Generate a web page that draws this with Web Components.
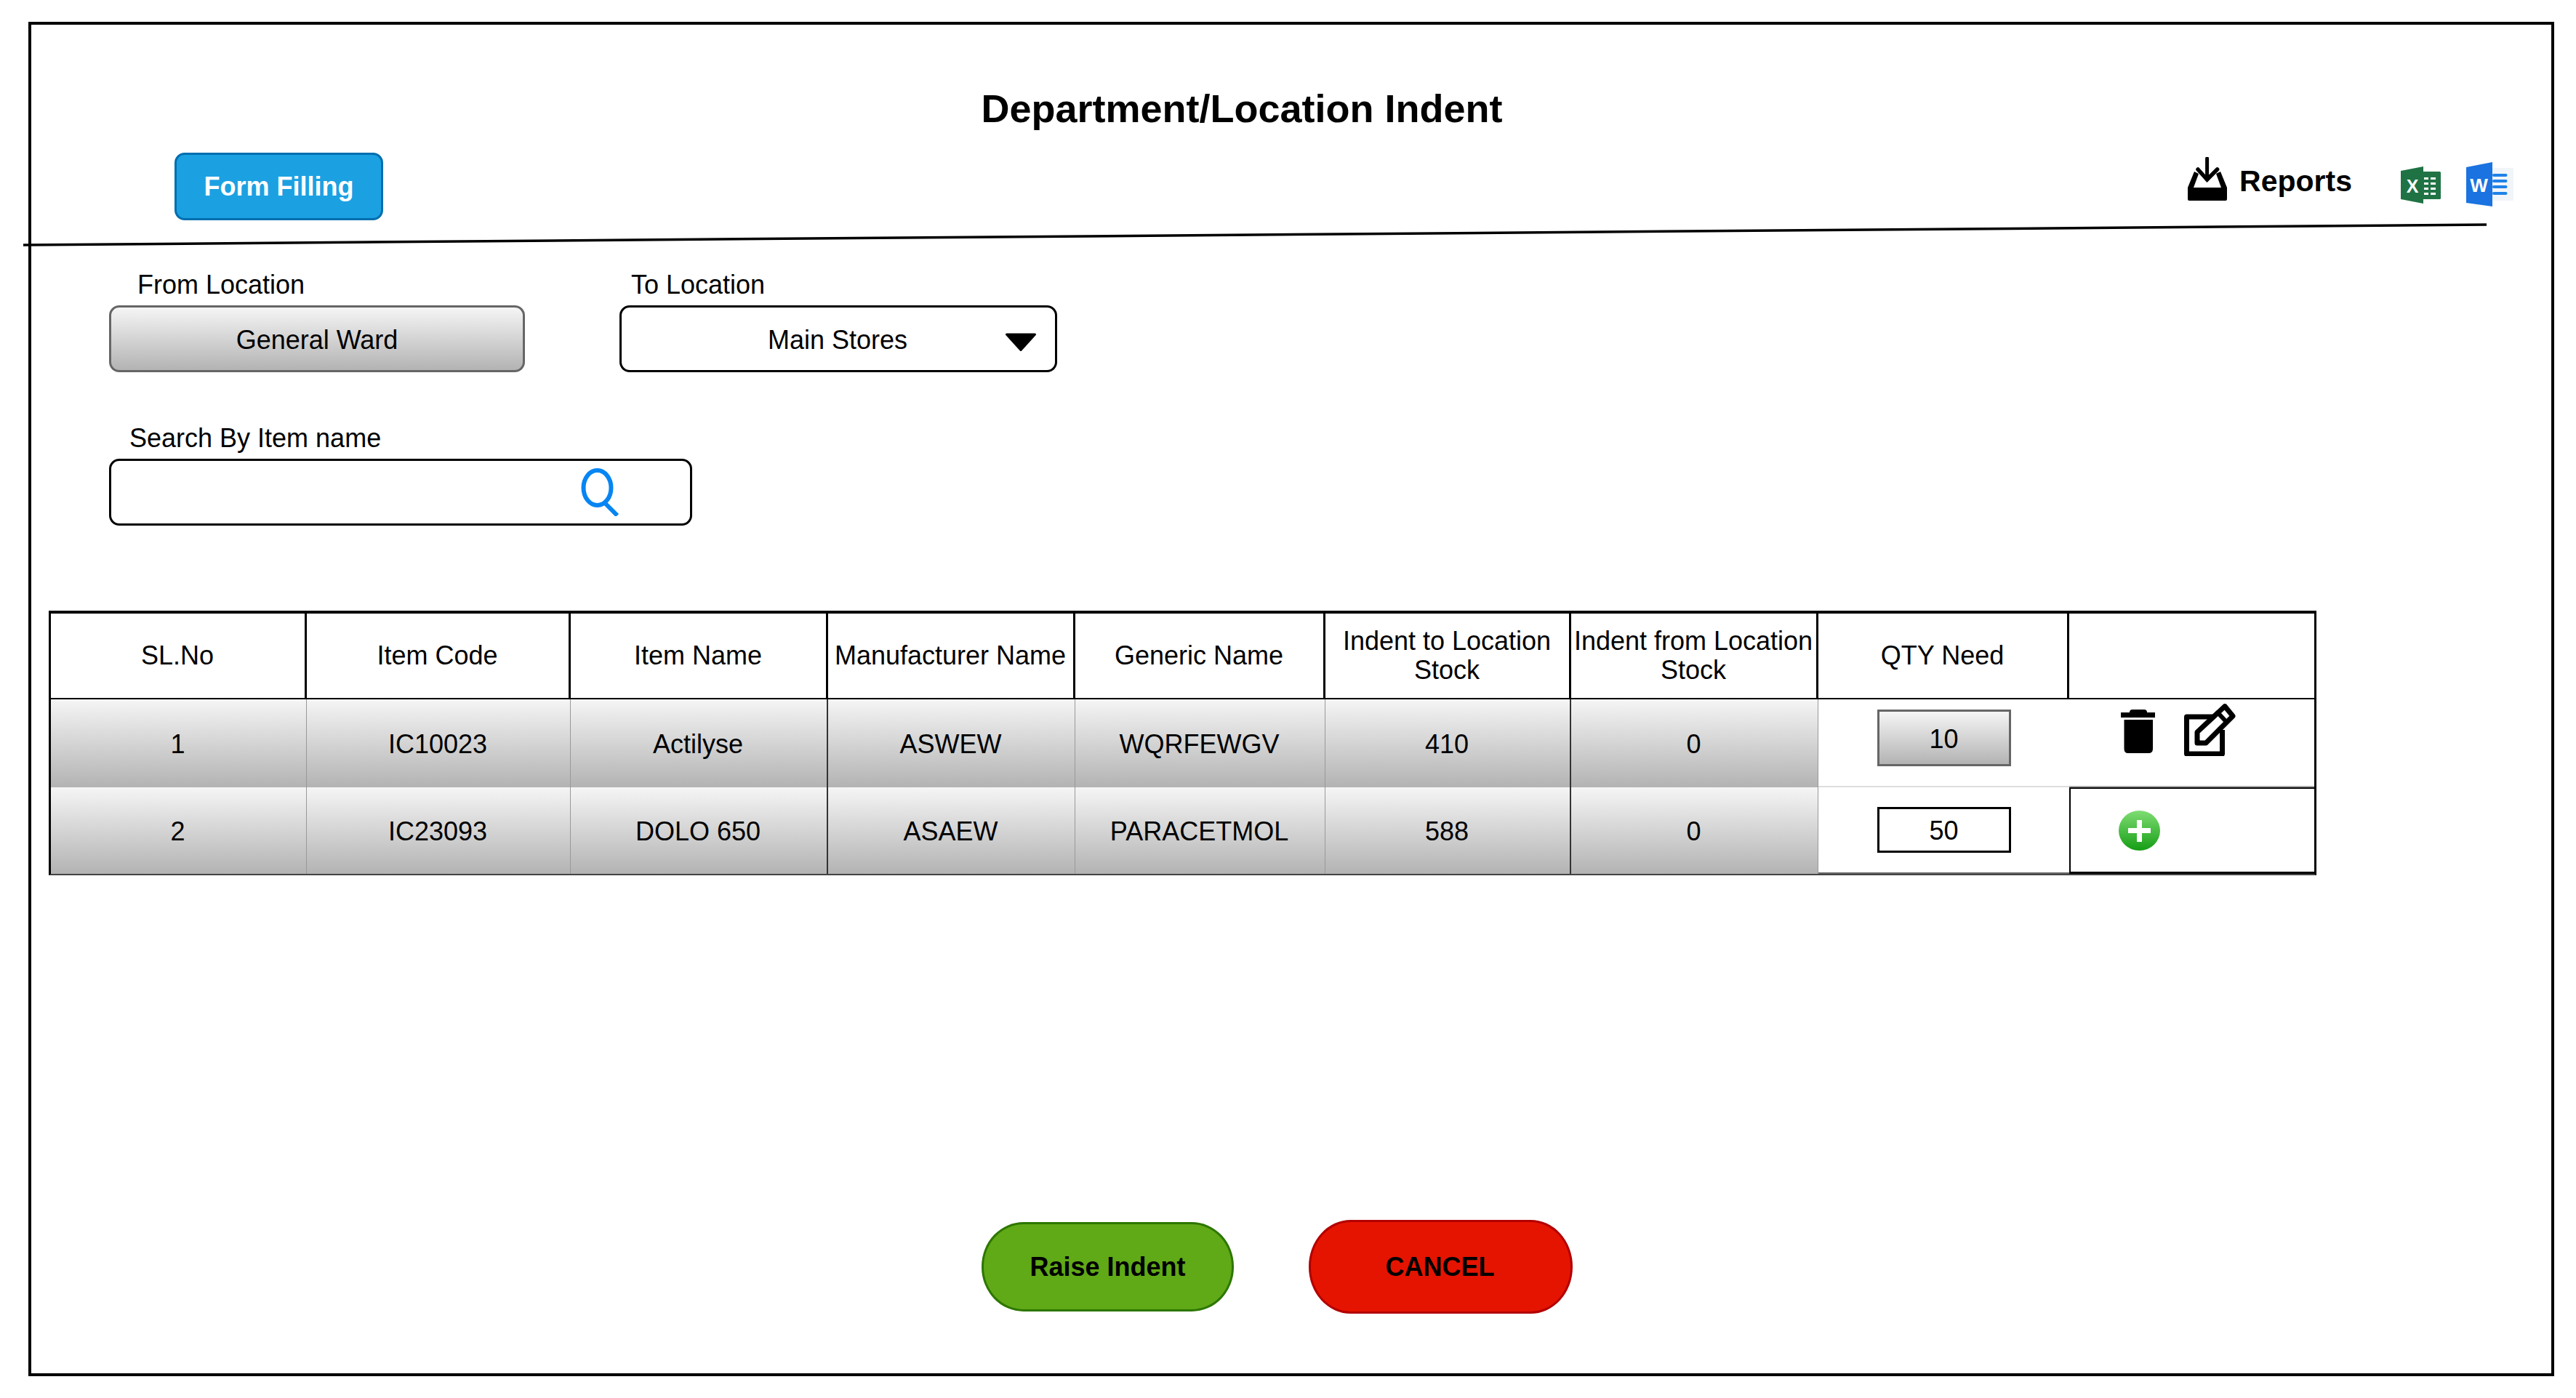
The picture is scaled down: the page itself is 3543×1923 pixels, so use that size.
<!DOCTYPE html>
<html><head><meta charset="utf-8">
<style>
html,body{margin:0;padding:0;background:#fff;}
body{font-family:"Liberation Sans",Arial,sans-serif;font-size:36px;color:#000;}
</style></head><body>
<indent-page></indent-page>
<script>
function el(name, css, html){
  customElements.define(name, class extends HTMLElement{
    constructor(){super();const r=this.attachShadow({mode:'open'});r.innerHTML='<style>'+css+'</style>'+html;}
  });
}
const GRAD='linear-gradient(180deg,#f5f5f5 0%,#b3b3b3 100%)';
el('ui-button',`
:host{display:flex;align-items:center;justify-content:center;box-sizing:border-box;font-weight:700;font-size:36px;color:#000;border:3px solid #000;padding-top:1px;}
:host([kind=form]){width:287px;height:93px;background:#1ba1e2;border-color:#006eaf;border-radius:14px;color:#fff;}
:host([kind=raise]){width:347px;height:123px;background:#60a917;border-color:#2d7600;border-radius:58px/61px;}
:host([kind=cancel]){width:363px;height:129px;background:#e51400;border-color:#b20000;border-radius:58px/64px;padding-right:2px;}
`,`<slot></slot>`);
el('ui-field',`
:host{display:block;}
.l{height:44px;line-height:44px;margin-bottom:6px;white-space:nowrap;padding-left:var(--label-x,0);}
.b{box-sizing:border-box;height:92px;padding-top:3px;border:3px solid #000;border-radius:14px;display:flex;align-items:center;justify-content:center;position:relative;}
:host([look=grey]) .b{background:${GRAD};border-color:#666;}
`,`<div class="l"><slot name="label"></slot></div><div class="b"><slot></slot></div>`);
el('ui-dropdown',`
:host{display:flex;align-items:center;flex:1;box-sizing:border-box;padding:0 26px 0 0;}
.t{flex:1;text-align:center;padding-left:66px;}
svg{display:block;width:42px;height:25px;margin-top:5px;}
`,`<span class="t"><slot></slot></span><svg viewBox="0 0 42 25"><path d="M1.500 2H40.500L21 23.500Z" fill="#000" stroke="#000" stroke-width="3" stroke-linejoin="round"/></svg>`);
el('ui-search',`
:host{display:flex;flex:1;justify-content:flex-end;box-sizing:border-box;padding:0 96px 3px 0;}
svg{display:block;width:54px;height:66px;}
`,`<svg viewBox="0 0 54 66"><ellipse cx="22.500" cy="27" rx="19" ry="24" fill="none" stroke="#0785f2" stroke-width="6"/><path d="M33 48L50 65" fill="none" stroke="#0785f2" stroke-width="6"/></svg>`);
el('ui-cell',`
:host{display:flex;align-items:center;justify-content:center;box-sizing:border-box;text-align:center;line-height:40px;overflow:visible;white-space:nowrap;}
:host([kind=head]){border-right:3px solid #000;border-bottom:2px solid #000;padding-right:1px;}
:host([kind=head][end]){border-right:0;}
:host([kind=data]){background:${GRAD};border-right:1px solid #999;padding:3px 2px 0 0;}
:host([kind=data][dark]){border-right:2px solid #333;}
:host([kind=plain]){background:#fff;border-bottom:2px solid #ddd;}
:host([kind=plain][last]){border-bottom:2px solid #666;}
:host([kind=action]){background:#fff;justify-content:flex-start;}
:host([kind=action][open]){border-bottom:2px solid #aaa;}
`,`<slot></slot>`);
el('qty-box',`
:host{display:flex;align-items:center;justify-content:center;box-sizing:border-box;width:184px;border:3px solid #000;margin:0 auto;}
:host([look=grey]){height:78px;background:${GRAD};border-color:#666;margin-top:-13px;padding-top:4px;}
:host([look=plain]){height:63px;padding-top:2px;}
`,`<slot></slot>`);
el('icon-trash',`:host{display:block;width:47px;height:60px;}svg{display:block;width:100%;height:100%;}`,
`<svg viewBox="0 0 47 60"><path d="M12 4Q12 0 16 0H32Q36 0 36 4Z" fill="#000"/><rect x="0" y="4" width="47" height="7" fill="#000"/><path d="M4.500 14H44V54Q44 60 38 60H10Q4.500 60 4.500 54Z" fill="#000"/></svg>`);
el('icon-edit',`:host{display:block;width:71px;height:72px;}svg{display:block;width:100%;height:100%;}`,
`<svg viewBox="0 0 71 72"><path d="M40 18H3.500V69H52.500V36" fill="none" stroke="#000" stroke-width="7" stroke-linejoin="round"/><path d="M56 3.500L67 17L30 54H18V39Z" fill="#fff" stroke="#000" stroke-width="7" stroke-linejoin="round"/><path d="M46 12L60 27" stroke="#000" stroke-width="6"/><path d="M17 45L26 56H17Z" fill="#000"/></svg>`);
el('icon-add',`:host{display:block;width:57px;height:55px;}svg{display:block;width:100%;height:100%;}`,
`<svg viewBox="0 0 57 55"><defs><linearGradient id="g" x1="0" y1="0" x2="0" y2="1"><stop offset="0" stop-color="#7fdd73"/><stop offset="1" stop-color="#159d15"/></linearGradient></defs><ellipse cx="28.500" cy="27.500" rx="28.500" ry="27.500" fill="url(#g)"/><path d="M25 13H32V24H44V31H32V43H25V31H13V24H25Z" fill="#fff"/></svg>`);
el('icon-reports',`:host{display:block;width:54px;height:60px;}svg{display:block;width:100%;height:100%;}`,
`<svg viewBox="0 0 54 60"><path d="M26.600 2V31" stroke="#000" stroke-width="5" stroke-linecap="round"/><path d="M14 17L26.600 31L40.600 17" fill="none" stroke="#000" stroke-width="5.500" stroke-linecap="round"/><path d="M0 58V42L9 20L15 23L8 42H46L39 23L45 20L54 42V58Q54 60 52 60H2Q0 60 0 58Z" fill="#000"/></svg>`);
el('icon-excel',`:host{display:block;width:55px;height:51px;}svg{display:block;width:100%;height:100%;}`,
`<svg viewBox="0 0 55 51"><rect x="30" y="7" width="25" height="38" rx="1.500" fill="#217346"/><path d="M0 6L31 0V51L0 45Z" fill="#1f7244"/><g fill="#fff"><rect x="32" y="15" width="6" height="3"/><rect x="41" y="15" width="7" height="3"/><rect x="32" y="22" width="6" height="3"/><rect x="41" y="22" width="7" height="3"/><rect x="32" y="29" width="6" height="3"/><rect x="41" y="29" width="7" height="3"/><rect x="32" y="36" width="6" height="3"/><rect x="41" y="36" width="7" height="3"/></g><text x="16" y="36" text-anchor="middle" font-family="Liberation Sans" font-size="25" font-weight="700" fill="#fff">X</text></svg>`);
el('icon-word',`:host{display:block;width:65px;height:61px;}svg{display:block;width:100%;height:100%;}`,
`<svg viewBox="0 0 65 61"><rect x="34" y="8" width="31" height="45" rx="1.500" fill="#f1f5f9"/><path d="M0 7L36 0V61L0 56Z" fill="#1a73e0"/><g fill="#1f82e8"><rect x="36" y="16" width="20.500" height="4" rx="2"/><rect x="36" y="24" width="20.500" height="4" rx="2"/><rect x="36" y="32" width="20.500" height="4" rx="2"/><rect x="36" y="41" width="20.500" height="4" rx="2"/></g><text x="17.500" y="41" text-anchor="middle" font-family="Liberation Sans" font-size="26" font-weight="700" fill="#fff">W</text></svg>`);
el('data-table',`
:host{display:block;}
.g{display:grid;box-sizing:border-box;width:3119px;grid-template-columns:352px 363px 354px 340px 344px 338px 340px 345px 1fr;grid-template-rows:118px 121px 119px;border:solid #000;border-width:4px 3px 0 3px;border-bottom:2px solid #444;position:relative;}
`,`<div class="g"><slot></slot></div>`);
el('indent-page',`
:host{display:block;box-sizing:border-box;width:3543px;height:1923px;padding:30px 0 0 39px;}
.frame{position:relative;box-sizing:border-box;width:3474px;height:1863px;border:4px solid #000;}
.title{margin:81px 136px 0 0;height:68px;line-height:68px;text-align:center;font-size:54px;font-weight:700;}
.bar{display:flex;justify-content:space-between;align-items:flex-start;margin-top:27px;padding:0 52px 0 197px;height:93px;}
.tools{display:flex;align-items:flex-start;padding-top:6px;}
.rep{display:flex;align-items:center;height:60px;font-size:41px;font-weight:700;gap:17px;margin-right:67px;}
.rep span{padding-top:6px;}
.tools icon-excel{margin-top:13px;margin-right:35px;}
.tools icon-word{margin-top:7px;}
.rule{position:absolute;left:-11px;top:270px;width:3400px;height:40px;overflow:visible;}
.filters{display:flex;gap:130px;margin:67px 0 0 107px;}
.filters ui-field:nth-child(1){width:572px;--label-x:39px;}
.filters ui-field:nth-child(2){width:602px;--label-x:16px;}
.srch{width:802px;margin:69px 0 0 107px;--label-x:28px;}
data-table{margin:117px 0 0 24px;}
.acts{display:flex;align-items:flex-start;gap:40px;padding-left:71px;margin-top:-36px;}
.acts icon-trash{margin-top:8px;}
.foot{display:flex;align-items:center;gap:103px;margin:474px 0 0 1307px;}
`,`<div class="frame">
<svg class="rule" viewBox="0 0 3400 40"><line x1="0" y1="33" x2="3388" y2="5" stroke="#000" stroke-width="3.500"/></svg>
<div class="title">Department/Location Indent</div>
<div class="bar"><ui-button kind="form">Form Filling</ui-button>
<div class="tools"><div class="rep"><icon-reports></icon-reports><span>Reports</span></div><icon-excel></icon-excel><icon-word></icon-word></div></div>
<div class="filters">
<ui-field look="grey"><span slot="label">From Location</span>General Ward</ui-field>
<ui-field><span slot="label">To Location</span><ui-dropdown>Main Stores</ui-dropdown></ui-field>
</div>
<ui-field class="srch"><span slot="label">Search By Item name</span><ui-search></ui-search></ui-field>
<data-table>
<ui-cell kind="head">SL.No</ui-cell><ui-cell kind="head">Item Code</ui-cell><ui-cell kind="head">Item Name</ui-cell><ui-cell kind="head">Manufacturer Name</ui-cell><ui-cell kind="head">Generic Name</ui-cell><ui-cell kind="head">Indent to Location<br>Stock</ui-cell><ui-cell kind="head">Indent from Location<br>Stock</ui-cell><ui-cell kind="head">QTY Need</ui-cell><ui-cell kind="head" end></ui-cell>
<ui-cell kind="data">1</ui-cell><ui-cell kind="data">IC10023</ui-cell><ui-cell kind="data" dark>Actilyse</ui-cell><ui-cell kind="data">ASWEW</ui-cell><ui-cell kind="data">WQRFEWGV</ui-cell><ui-cell kind="data" dark>410</ui-cell><ui-cell kind="data">0</ui-cell><ui-cell kind="plain"><qty-box look="grey">10</qty-box></ui-cell><ui-cell kind="action" open><div class="acts"><icon-trash></icon-trash><icon-edit></icon-edit></div></ui-cell>
<ui-cell kind="data">2</ui-cell><ui-cell kind="data">IC23093</ui-cell><ui-cell kind="data" dark>DOLO 650</ui-cell><ui-cell kind="data">ASAEW</ui-cell><ui-cell kind="data">PARACETMOL</ui-cell><ui-cell kind="data" dark>588</ui-cell><ui-cell kind="data">0</ui-cell><ui-cell kind="plain" last><qty-box look="plain">50</qty-box></ui-cell><ui-cell kind="action" style="border:solid #000;border-width:2px 0 3px 2px;padding-left:66px"><icon-add></icon-add></ui-cell>
</data-table>
<div class="foot"><ui-button kind="raise">Raise Indent</ui-button><ui-button kind="cancel">CANCEL</ui-button></div>
</div>`);
</script>
</body></html>
